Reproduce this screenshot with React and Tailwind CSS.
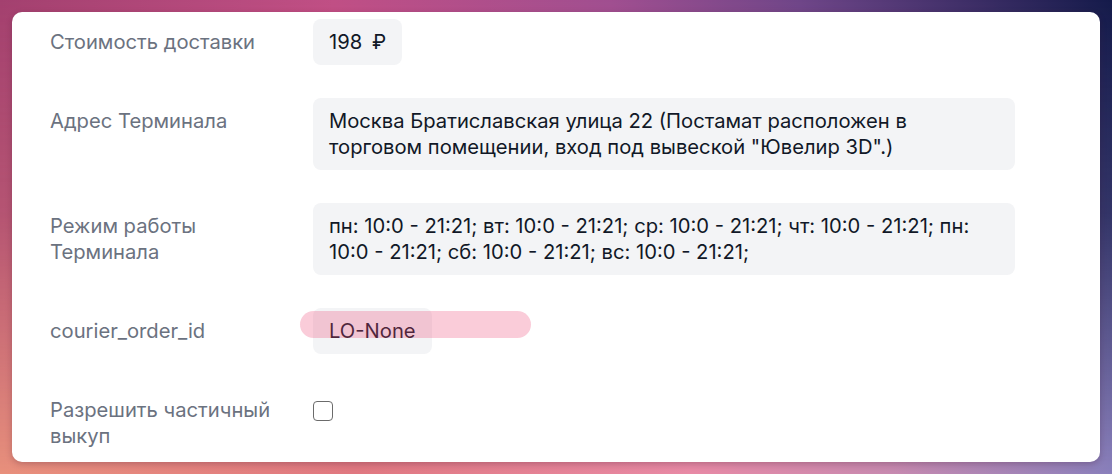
import React from "react";

const rows = [
  { label: "Стоимость доставки", value: <>198 <span className="ml-1">₽</span></>, fit: true },
  {
    label: "Адрес Терминала",
    value: 'Москва Братиславская улица 22 (Постамат расположен в торговом помещении, вход под вывеской "Ювелир 3D".)',
  },
  {
    label: "Режим работы Терминала",
    value:
      "пн: 10:0 - 21:21; вт: 10:0 - 21:21; ср: 10:0 - 21:21; чт: 10:0 - 21:21; пн: 10:0 - 21:21; сб: 10:0 - 21:21; вс: 10:0 - 21:21;",
  },
];

function Field({ children, fit }) {
  return (
    <div className={`${fit ? "w-fit" : "w-full"} rounded-lg bg-[#f3f4f6] px-4 py-[10px] text-[#111827]`}>
      {children}
    </div>
  );
}

export default function App() {
  return (
    <div
      className="relative h-[474px] w-[1112px] overflow-hidden bg-[linear-gradient(to_right,#e8907c_0%,#e07880_32%,#e88aa5_62%,#c88ab0_80%,#8a80bc_100%)] p-3"
      style={{ fontFamily: "Inter, 'Noto Sans', sans-serif" }}
    >
      {/* gradient wash from the top edge */}
      <div className="absolute inset-0 bg-[linear-gradient(to_right,#a3406f_0%,#c04f85_30%,#a04e90_55%,#6e4588_72%,#141a4a_100%)] [mask-image:linear-gradient(to_bottom,black_0%,rgba(0,0,0,0.75)_45%,transparent_100%)]" />

      <div className="relative h-full rounded-[10px] bg-white pl-[38px] pt-[7px] shadow-[0_2px_6px_rgba(60,20,40,0.25)]">
        <div className="grid grid-cols-[240px_702px] gap-x-[23px] gap-y-[33px] text-[20.2px] leading-[26px]">
          {rows.map((r) => (
            <React.Fragment key={r.label}>
              <div className="pt-[10px] text-[#6b7280]">{r.label}</div>
              <Field fit={r.fit}>{r.value}</Field>
            </React.Fragment>
          ))}

          <div className="pt-[10px] text-[#6b7280]">courier_order_id</div>
          <div className="relative">
            <Field fit>LO-None</Field>
            {/* highlighter mark over the id */}
            <div className="absolute left-[-13px] top-[3px] h-[27px] w-[231px] rounded-full bg-[rgba(236,72,120,0.28)]" />
          </div>

          <div className="pt-[10px] text-[#6b7280]">Разрешить частичный выкуп</div>
          <div className="pt-[14px]">
            <input
              type="checkbox"
              className="block h-5 w-5 appearance-none rounded-[4px] border-[1.5px] border-[#6b6b6b] bg-white"
            />
          </div>
        </div>
      </div>
    </div>
  );
}
